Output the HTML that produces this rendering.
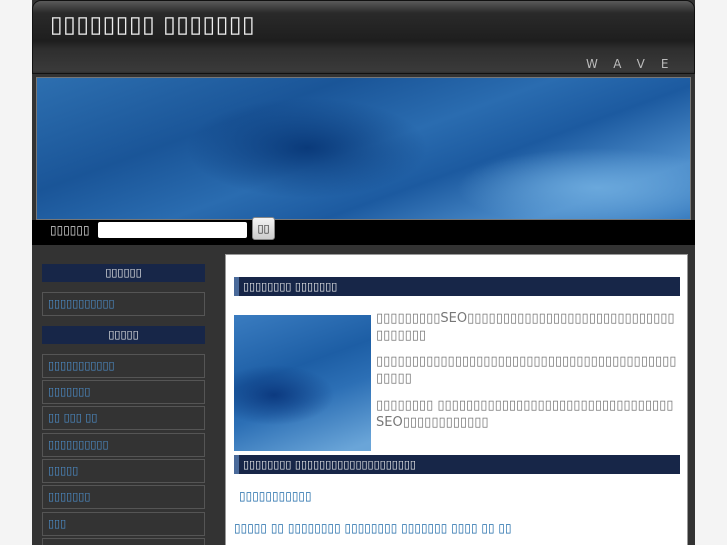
<!DOCTYPE html>
<html><head><meta charset="utf-8"><style>
html,body{margin:0;width:727px;height:545px;overflow:hidden}
body{background:#f4f4f4;font-family:"DejaVu Sans","Liberation Sans",sans-serif;position:relative}
#wrap{position:absolute;left:32px;top:0;width:663px;height:545px;background:#333;overflow:hidden}
#head{position:absolute;left:0;top:0;width:663px;height:74px;border-radius:9px 9px 0 0;background:linear-gradient(#5a5a5a 0,#2a2a2a 12px,#1e1e1e 40px,#2e2e2e 48px,#3a3a3a 70px,#222 74px);border:1px solid #111;box-sizing:border-box}
#title{position:absolute;left:17px;top:11px;color:#eee;font-size:23px;letter-spacing:0.5px}
#wave{position:absolute;left:553px;top:56px;color:#bbb;font-size:12px;letter-spacing:16px}
#banner{position:absolute;left:4px;top:77px;width:655px;height:143px;border:1px solid #777;box-sizing:border-box;background:
radial-gradient(ellipse 120px 50px at 270px 70px,#0a3a7a,transparent),
radial-gradient(ellipse 140px 40px at 560px 110px,#6aa8dc,transparent),
linear-gradient(160deg,#2d6fb0 0%,#1a5598 30%,#2a6cb0 50%,#1c5aa0 65%,#4f8fcc 85%,#3a7dc0 100%)}
#search{position:absolute;left:0;top:220px;width:663px;height:25px;background:#000}
#search span{position:absolute;left:18px;top:3px;color:#ddd;font-size:12px}
#search .in{position:absolute;left:66px;top:2px;width:149px;height:16px;background:#fff;border-radius:2px}
#search .bt{position:absolute;left:220px;top:-3px;width:23px;height:23px;background:linear-gradient(#f4f4f4,#ccc);border:1px solid #888;border-radius:3px;box-sizing:border-box;font-size:11px;text-align:center;line-height:21px;color:#222}
.sh{position:absolute;left:10px;width:163px;height:18px;background:#172648;color:#eee;font-size:11px;text-align:center;line-height:18px}
.sl{position:absolute;left:10px;width:163px;height:24px;border:1px solid #555;box-sizing:border-box;color:#4d8fcc;font-size:11px;padding-left:5px;line-height:22px}
#main{position:absolute;left:193px;top:254px;width:463px;height:300px;background:#fff;border:1px solid #999;box-sizing:border-box}
.h{position:absolute;left:8px;width:446px;height:19px;background:#172648;border-left:5px solid #4a6a9a;box-sizing:border-box;color:#eee;font-size:11px;line-height:19px;padding-left:4px}
#img{position:absolute;left:8px;top:60px;width:137px;height:136px;background:
radial-gradient(ellipse 60px 30px at 40px 80px,#0c3a80,transparent),
linear-gradient(160deg,#3a7cc0,#1d5ea5 40%,#2c6fb5 60%,#6aa5d8 95%)}
.p{position:absolute;left:150px;width:305px;color:#777;font-size:13px;line-height:17px;word-break:break-all}
.a{position:absolute;color:#1d6aa8;font-size:12px;white-space:nowrap}
</style></head><body>
<div id="wrap">
<div id="head"><div id="title">▯▯▯▯▯▯▯▯ ▯▯▯▯▯▯▯</div><div id="wave">WAVE</div></div>
<div id="banner"></div>
<div id="search"><span>▯▯▯▯▯▯</span><div class="in"></div><div class="bt">▯▯</div></div>
<div class="sh" style="top:264px">▯▯▯▯▯▯</div>
<div class="sl" style="top:292px">▯▯▯▯▯▯▯▯▯▯▯</div>
<div class="sh" style="top:326px">▯▯▯▯▯</div>
<div class="sl" style="top:354px">▯▯▯▯▯▯▯▯▯▯▯</div>
<div class="sl" style="top:380px">▯▯▯▯▯▯▯</div>
<div class="sl" style="top:406px">▯▯ ▯▯▯ ▯▯</div>
<div class="sl" style="top:433px">▯▯▯▯▯▯▯▯▯▯</div>
<div class="sl" style="top:459px">▯▯▯▯▯</div>
<div class="sl" style="top:485px">▯▯▯▯▯▯▯</div>
<div class="sl" style="top:512px">▯▯▯</div>
<div class="sl" style="top:538px"></div>
<div id="main">
<div class="h" style="top:22px">▯▯▯▯▯▯▯▯ ▯▯▯▯▯▯▯</div>
<div id="img"></div>
<div class="p" style="top:55px">▯▯▯▯▯▯▯▯▯SEO▯▯▯▯▯▯▯▯▯▯▯▯▯▯▯▯▯▯▯▯▯▯▯▯▯▯▯▯▯▯▯▯▯▯▯▯</div>
<div class="p" style="top:98px">▯▯▯▯▯▯▯▯▯▯▯▯▯▯▯▯▯▯▯▯▯▯▯▯▯▯▯▯▯▯▯▯▯▯▯▯▯▯▯▯▯▯▯▯▯▯▯</div>
<div class="p" style="top:142px">▯▯▯▯▯▯▯▯ ▯▯▯▯▯▯▯▯▯▯▯▯▯▯▯▯▯▯▯▯▯▯▯▯▯▯▯▯▯▯▯▯▯SEO▯▯▯▯▯▯▯▯▯▯▯▯</div>
<div class="h" style="top:200px">▯▯▯▯▯▯▯▯ ▯▯▯▯▯▯▯▯▯▯▯▯▯▯▯▯▯▯▯▯</div>
<div class="a" style="left:13px;top:234px">▯▯▯▯▯▯▯▯▯▯▯</div>
<div class="a" style="left:8px;top:266px">▯▯▯▯▯ ▯▯ ▯▯▯▯▯▯▯▯ ▯▯▯▯▯▯▯▯ ▯▯▯▯▯▯▯ ▯▯▯▯ ▯▯ ▯▯</div>
</div>
</div>
</body></html>
